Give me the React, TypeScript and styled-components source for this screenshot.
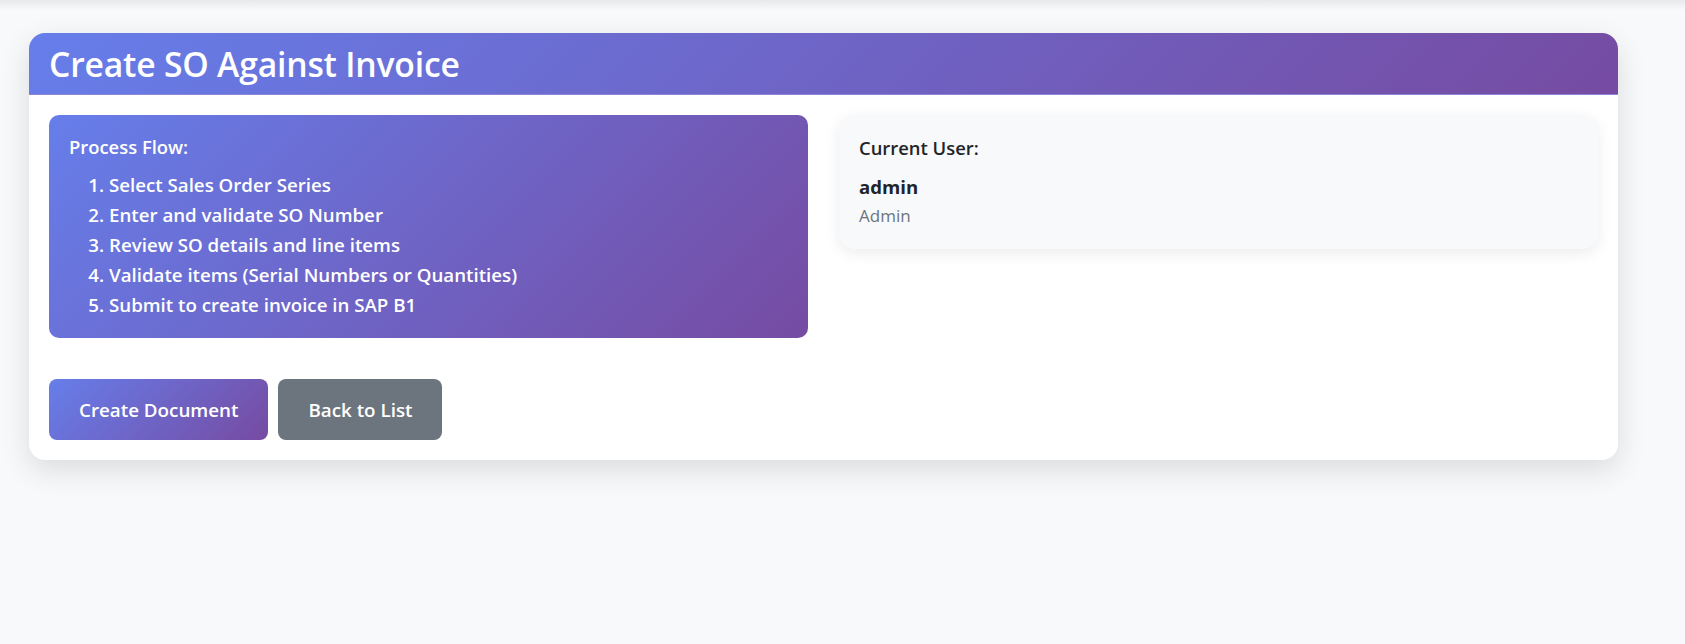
import React from "react";
import styled, { createGlobalStyle } from "styled-components";

const GlobalStyle = createGlobalStyle`
  html, body {
    margin: 0;
    padding: 0;
    background: #f8f9fa;
    font-family: "Open Sans", "Noto Sans", Arial, sans-serif;
    color: #212529;
  }
  * { box-sizing: border-box; }
`;

const TopShade = styled.div`
  height: 10px;
  background: linear-gradient(to bottom, #e8e9eb, #f8f9fa);
`;

const Page = styled.main`
  min-height: calc(100vh - 10px);
  padding: 23px 67px 60px 29px;
`;

const Card = styled.section`
  background: #ffffff;
  border-radius: 16px;
  box-shadow: 0 10px 30px rgba(0, 0, 0, 0.12);
  overflow: hidden;
`;

const CardHeader = styled.header`
  background: linear-gradient(135deg, #667eea 0%, #764ba2 100%);
  padding: 12px 20px 10px 20px;
  height: 62px;
  display: flex;
  align-items: center;
  border-bottom: 1px solid #8e86d6;
`;

const Title = styled.h2`
  margin: 0;
  color: #ffffff;
  font-size: 33.7px;
  font-weight: 600;
  line-height: 1.2;
  letter-spacing: -0.2px;
`;

const CardBody = styled.div`
  padding: 20px 20px 20px 20px;
`;

const Columns = styled.div`
  display: grid;
  grid-template-columns: 1fr 1fr;
  gap: 31px;
  align-items: start;
`;

const FlowBox = styled.div`
  background: linear-gradient(135deg, #667eea 0%, #764ba2 100%);
  color: #ffffff;
  border-radius: 10px;
  padding: 20px 20px 18px 20px;
`;

const BoxHeading = styled.h6`
  margin: 0 0 12px 0;
  font-size: 18.4px;
  font-weight: 600;
  line-height: 23px;
`;

const FlowList = styled.ol`
  margin: 0;
  padding-left: 40px;
`;

const FlowItem = styled.li`
  font-size: 18.7px;
  font-weight: 600;
  line-height: 30px;
`;

const UserBox = styled.div`
  background: #f8f9fa;
  border-radius: 15px;
  padding: 21px 20px 19px 20px;
  box-shadow: 0 4px 15px rgba(0, 0, 0, 0.08);
`;

const UserHeading = styled(BoxHeading)`
  margin-bottom: 13px;
  color: #212529;
`;

const UserName = styled.div`
  font-size: 18.6px;
  font-weight: 700;
  line-height: 30px;
  color: #212529;
`;

const UserRole = styled.div`
  font-size: 17px;
  font-weight: 400;
  line-height: 28px;
  color: #6c757d;
`;

const Actions = styled.div`
  display: flex;
  gap: 10px;
  margin-top: 41px;
`;

const Button = styled.button<{ $variant: "primary" | "secondary" }>`
  border: none;
  border-radius: 8px;
  height: 61px;
  padding: 0 30px;
  font-family: inherit;
  font-size: 18.8px;
  font-weight: 600;
  color: #ffffff;
  cursor: pointer;
  background: ${(p) =>
    p.$variant === "primary"
      ? "linear-gradient(135deg, #667eea 0%, #764ba2 100%)"
      : "#6c757d"};
`;

const steps = [
  "Select Sales Order Series",
  "Enter and validate SO Number",
  "Review SO details and line items",
  "Validate items (Serial Numbers or Quantities)",
  "Submit to create invoice in SAP B1",
];

export default function App() {
  return (
    <>
      <GlobalStyle />
      <TopShade />
      <Page>
        <Card>
          <CardHeader>
            <Title>Create SO Against Invoice</Title>
          </CardHeader>
          <CardBody>
            <Columns>
              <FlowBox>
                <BoxHeading>Process Flow:</BoxHeading>
                <FlowList>
                  {steps.map((s) => (
                    <FlowItem key={s}>{s}</FlowItem>
                  ))}
                </FlowList>
              </FlowBox>
              <UserBox>
                <UserHeading>Current User:</UserHeading>
                <UserName>admin</UserName>
                <UserRole>Admin</UserRole>
              </UserBox>
            </Columns>
            <Actions>
              <Button $variant="primary">Create Document</Button>
              <Button $variant="secondary">Back to List</Button>
            </Actions>
          </CardBody>
        </Card>
      </Page>
    </>
  );
}
